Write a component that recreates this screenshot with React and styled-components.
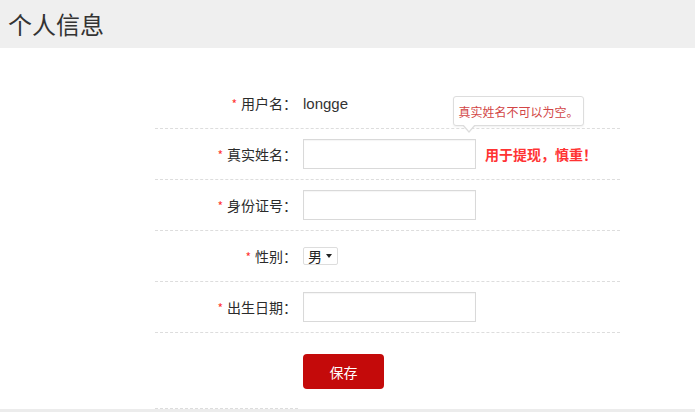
import React from "react";
import styled, { createGlobalStyle } from "styled-components";

const GlobalStyle = createGlobalStyle`
  html, body {
    margin: 0;
    padding: 0;
    background: #fff;
  }
  body {
    font-family: "Liberation Sans", "Noto Sans CJK SC", sans-serif;
    color: #333;
    overflow: hidden;
  }
`;

const Page = styled.div`
  width: 695px;
  height: 412px;
  display: flex;
  flex-direction: column;
`;

const Header = styled.div`
  height: 48px;
  background: #efefef;
  display: flex;
  align-items: center;
  padding-left: 8px;
`;

const Title = styled.h1`
  margin: 0;
  font-size: 24px;
  font-weight: normal;
  color: #333;
  font-family: "Noto Sans CJK SC", sans-serif;
  line-height: 1;
`;

const Main = styled.div`
  flex: 1;
  padding: 30px 0 0 155px;
  display: flex;
  flex-direction: column;
`;

const Form = styled.div`
  width: 465px;
  display: flex;
  flex-direction: column;
`;

const Row = styled.div`
  height: 50px;
  display: flex;
  align-items: center;
  border-bottom: 1px dashed #ddd;
`;

const Label = styled.div`
  width: 148px;
  box-sizing: border-box;
  padding-right: 6px;
  text-align: right;
  font-size: 14px;
  color: #2b2b2b;
  font-family: "Noto Sans CJK SC", sans-serif;
`;

const Star = styled.span`
  color: #f33;
  margin-right: 4px;
  font-size: 12px;
`;

/* full-width punctuation cell, so the colon / comma keeps its em box */
const Punct = styled.span`
  display: inline-block;
  width: ${(p) => p.$w || 14}px;
  text-align: ${(p) => p.$align || "center"};
`;

const Value = styled.span`
  font-size: 15px;
  color: #333;
`;

const Field = styled.div`
  position: relative;
  display: flex;
  align-items: center;
`;

const Input = styled.input`
  width: 173px;
  height: 30px;
  box-sizing: border-box;
  border: 1px solid #d9d9d9;
  box-shadow: inset 0 1px 1px rgba(0, 0, 0, 0.04);
  outline: none;
  padding: 0 6px;
  font-size: 14px;
`;

const Hint = styled.span`
  margin-left: 9px;
  color: #f33;
  font-size: 14px;
  font-weight: bold;
  font-family: "Noto Sans CJK SC", sans-serif;
  white-space: nowrap;
`;

const Tooltip = styled.div`
  position: absolute;
  left: 150px;
  bottom: calc(100% + 13px);
  width: 131px;
  height: 30px;
  box-sizing: border-box;
  border: 1px solid #ddd;
  border-radius: 3px;
  background: #fff;
  color: #d24545;
  font-size: 12px;
  font-family: "Noto Sans CJK SC", sans-serif;
  display: flex;
  align-items: center;
  justify-content: center;
  white-space: nowrap;
  box-shadow: 0 1px 2px rgba(0, 0, 0, 0.06);

  &:before,
  &:after {
    content: "";
    position: absolute;
    left: 8px;
    border-style: solid;
    border-color: transparent;
  }
  &:before {
    top: 100%;
    border-width: 8px 7px 0;
    border-top-color: #ddd;
  }
  &:after {
    top: calc(100% - 1px);
    left: 9px;
    border-width: 7px 6px 0;
    border-top-color: #fff;
  }
`;

const Select = styled.div`
  display: flex;
  align-items: center;
  gap: 4px;
  height: 18px;
  width: 35px;
  box-sizing: border-box;
  padding: 0 4px;
  border: 1px solid #ddd;
  border-radius: 2px;
  font-size: 14px;
  color: #222;
  font-family: "Noto Sans CJK SC", sans-serif;
`;

const Caret = styled.span`
  width: 0;
  height: 0;
  border-left: 3.5px solid transparent;
  border-right: 3.5px solid transparent;
  border-top: 4px solid #222;
`;

const Actions = styled.div`
  margin: 21px 0 0 148px;
`;

const SaveButton = styled.button`
  width: 81px;
  height: 35px;
  border: none;
  border-radius: 4px;
  background: #c40a0a;
  color: #fff;
  font-size: 14px;
  font-family: "Noto Sans CJK SC", sans-serif;
  cursor: pointer;
`;

const Tail = styled.div`
  margin-top: auto;
  width: 143px;
  border-bottom: 1px dashed #ddd;
`;

const Footer = styled.div`
  height: 3px;
  background: #ececec;
`;

const fields = [
  { label: "真实姓名", tip: "真实姓名不可以为空。", hint: true },
  { label: "身份证号" },
];

const FieldLabel = ({ children }) => (
  <Label>
    <Star>*</Star>
    {children}
    <Punct>：</Punct>
  </Label>
);

export default function App() {
  return (
    <>
      <GlobalStyle />
      <Page>
        <Header>
          <Title>个人信息</Title>
        </Header>
        <Main>
          <Form>
            <Row>
              <FieldLabel>用户名</FieldLabel>
              <Value>longge</Value>
            </Row>
            {fields.map((f) => (
              <Row key={f.label}>
                <FieldLabel>{f.label}</FieldLabel>
                <Field>
                  <Input />
                  {f.tip && <Tooltip>{f.tip}</Tooltip>}
                  {f.hint && (
                    <Hint>
                      用于提现<Punct $align="center">，</Punct>慎重<Punct $align="center">！</Punct>
                    </Hint>
                  )}
                </Field>
              </Row>
            ))}
            <Row>
              <FieldLabel>性别</FieldLabel>
              <Select>男<Caret /></Select>
            </Row>
            <Row>
              <FieldLabel>出生日期</FieldLabel>
              <Field>
                <Input />
              </Field>
            </Row>
          </Form>
          <Actions>
            <SaveButton>保存</SaveButton>
          </Actions>
          <Tail />
        </Main>
        <Footer />
      </Page>
    </>
  );
}
